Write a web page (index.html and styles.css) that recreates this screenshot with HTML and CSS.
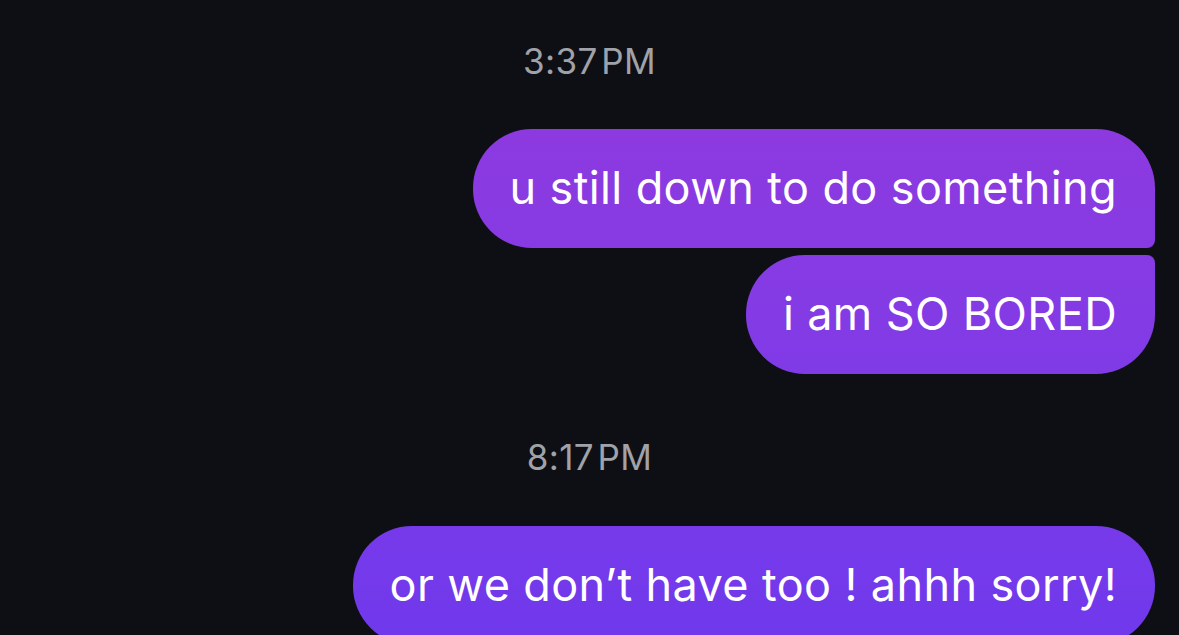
FILE: index.html
```html
<!DOCTYPE html>
<html lang="en">
<head>
    <meta charset="UTF-8">
    <meta name="viewport" content="width=device-width, initial-scale=1.0">
    <title>Messages</title>
    <link rel="stylesheet" href="styles.css">
</head>
<body>
    <div class="thread">
        <div class="timestamp">3:37&#8202;PM</div>
        <div class="group">
            <div class="bubble first">u still down to do something</div>
            <div class="bubble last">i am SO BORED</div>
        </div>

        <div class="timestamp second">8:17&#8202;PM</div>
        <div class="group">
            <div class="bubble single">or we don’t have too ! ahhh sorry!</div>
        </div>
    </div>
</body>
</html>
```

FILE: styles.css
```css
body {
    margin: 0;
    height: 100vh;
    overflow: hidden;
    background-color: #0e0f14;
    font-family: Inter, "Noto Sans", sans-serif;
}
.thread {
    display: flex;
    flex-direction: column;
    padding: 0 24px 0 0;
}
.timestamp {
    align-self: center;
    margin-left: 24px; /* centre on the window, not the padded box */
    color: #a0a2a9;
    font-size: 35px;
    line-height: 36px;
    margin-top: 43px;
    letter-spacing: 0.4px;
}
.timestamp.second {
    margin-top: 65px;
}
.group {
    display: flex;
    flex-direction: column;
    align-items: flex-end;
    gap: 7px;
    margin-top: 50px;
}
.second + .group {
    margin-top: 51px;
}
/* gradient is pinned to the window so it shifts down the thread */
.bubble {
    box-sizing: border-box;
    height: 119px;
    display: flex;
    align-items: center;
    padding: 0 38px 2px 37px;
    color: #fff;
    font-size: 45px;
    letter-spacing: 0.38px;
    background: linear-gradient(180deg, #9338dc 0%, #853be4 45%, #7039ec 100%) fixed;
    border-radius: 59px;
}
.bubble.first {
    border-bottom-right-radius: 8px;
}
.bubble.last {
    border-top-right-radius: 8px;
}
```
